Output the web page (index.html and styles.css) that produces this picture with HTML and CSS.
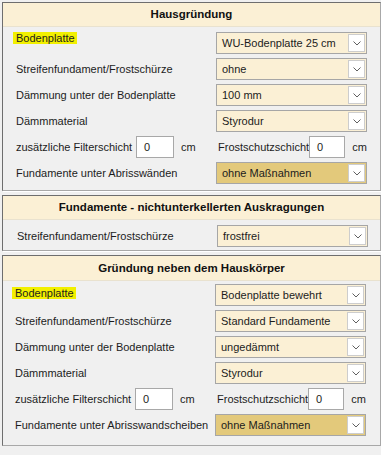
FILE: index.html
```html
<!DOCTYPE html>
<html lang="de">
<head>
<meta charset="utf-8">
<link rel="stylesheet" href="styles.css">
</head>
<body>
<div class="frame">
  <section class="panel p1">
    <div class="head">Hausgründung</div>
    <div class="body">
      <span class="lbl mark">Bodenplatte</span>
      <div class="select"><span class="val">WU-Bodenplatte 25 cm</span><span class="btn"><svg width="8" height="5" viewBox="0 0 8 5"><polyline points="0.5,0.5 4,4 7.5,0.5" fill="none" stroke="#606060" stroke-width="1"/></svg></span></div>
      <span class="lbl">Streifenfundament/Frostschürze</span>
      <div class="select"><span class="val">ohne</span><span class="btn"><svg width="8" height="5" viewBox="0 0 8 5"><polyline points="0.5,0.5 4,4 7.5,0.5" fill="none" stroke="#606060" stroke-width="1"/></svg></span></div>
      <span class="lbl">Dämmung unter der Bodenplatte</span>
      <div class="select"><span class="val">100 mm</span><span class="btn"><svg width="8" height="5" viewBox="0 0 8 5"><polyline points="0.5,0.5 4,4 7.5,0.5" fill="none" stroke="#606060" stroke-width="1"/></svg></span></div>
      <span class="lbl">Dämmmaterial</span>
      <div class="select"><span class="val">Styrodur</span><span class="btn"><svg width="8" height="5" viewBox="0 0 8 5"><polyline points="0.5,0.5 4,4 7.5,0.5" fill="none" stroke="#606060" stroke-width="1"/></svg></span></div>
      <div class="pair"><span class="plbl">zusätzliche Filterschicht</span><span class="num">0</span><span class="unit">cm</span></div>
      <div class="pair right"><span class="plbl r">Frostschutzschicht</span><span class="num">0</span><span class="unit">cm</span></div>
      <span class="lbl">Fundamente unter Abrisswänden</span>
      <div class="select gold"><span class="val">ohne Maßnahmen</span><span class="btn"><svg width="8" height="5" viewBox="0 0 8 5"><polyline points="0.5,0.5 4,4 7.5,0.5" fill="none" stroke="#606060" stroke-width="1"/></svg></span></div>
    </div>
  </section>

  <section class="panel p2">
    <div class="head">Fundamente - nichtunterkellerten Auskragungen</div>
    <div class="body">
      <span class="lbl">Streifenfundament/Frostschürze</span>
      <div class="select"><span class="val">frostfrei</span><span class="btn"><svg width="8" height="5" viewBox="0 0 8 5"><polyline points="0.5,0.5 4,4 7.5,0.5" fill="none" stroke="#606060" stroke-width="1"/></svg></span></div>
    </div>
  </section>

  <section class="panel p3">
    <div class="head">Gründung neben dem Hauskörper</div>
    <div class="body">
      <span class="lbl mark">Bodenplatte</span>
      <div class="select"><span class="val">Bodenplatte bewehrt</span><span class="btn"><svg width="8" height="5" viewBox="0 0 8 5"><polyline points="0.5,0.5 4,4 7.5,0.5" fill="none" stroke="#606060" stroke-width="1"/></svg></span></div>
      <span class="lbl">Streifenfundament/Frostschürze</span>
      <div class="select"><span class="val">Standard Fundamente</span><span class="btn"><svg width="8" height="5" viewBox="0 0 8 5"><polyline points="0.5,0.5 4,4 7.5,0.5" fill="none" stroke="#606060" stroke-width="1"/></svg></span></div>
      <span class="lbl">Dämmung unter der Bodenplatte</span>
      <div class="select"><span class="val">ungedämmt</span><span class="btn"><svg width="8" height="5" viewBox="0 0 8 5"><polyline points="0.5,0.5 4,4 7.5,0.5" fill="none" stroke="#606060" stroke-width="1"/></svg></span></div>
      <span class="lbl">Dämmmaterial</span>
      <div class="select"><span class="val">Styrodur</span><span class="btn"><svg width="8" height="5" viewBox="0 0 8 5"><polyline points="0.5,0.5 4,4 7.5,0.5" fill="none" stroke="#606060" stroke-width="1"/></svg></span></div>
      <div class="pair"><span class="plbl">zusätzliche Filterschicht</span><span class="num">0</span><span class="unit">cm</span></div>
      <div class="pair right"><span class="plbl r">Frostschutzschicht</span><span class="num">0</span><span class="unit">cm</span></div>
      <span class="lbl">Fundamente unter Abrisswandscheiben</span>
      <div class="select gold"><span class="val">ohne Maßnahmen</span><span class="btn"><svg width="8" height="5" viewBox="0 0 8 5"><polyline points="0.5,0.5 4,4 7.5,0.5" fill="none" stroke="#606060" stroke-width="1"/></svg></span></div>
    </div>
  </section>
</div>
</body>
</html>
```

FILE: styles.css
```css
html, body {
  margin: 0;
  background: #f0f0f0;
}
body {
  font-family: "Liberation Sans", Arial, sans-serif;
  font-size: 11px;
  color: #1c1c1c;
}
.frame {
  padding: 2px 0 0 2px;
  display: flex;
  flex-direction: column;
  gap: 4px;
}
.panel {
  background: #f0f0f0;
  border-style: solid;
  border-width: 1px;
  border-color: #6e6e6e #a8a8a8 #a8a8a8 #6e6e6e;
  box-shadow: 1px 1px 0 #ffffff;
}
.head {
  background: #fbf0d5;
  border-bottom: 1px solid #e9e2cf;
  height: 23px;
  line-height: 23px;
  text-align: center;
  font-weight: bold;
  font-size: 11.5px;
  color: #111;
}
.body {
  display: grid;
  grid-template-columns: 200px 151px;
  grid-auto-rows: 22px;
  row-gap: 4px;
  padding: 5px 0 6px 13px;
  align-items: center;
}
.p2 .body { padding-top: 5px; padding-bottom: 3px; padding-left: 14px; }
.p3 .head { height: 24px; line-height: 24px; }
.p3 .body { padding-top: 3px; padding-bottom: 9px; padding-left: 12px; }
.lbl {
  white-space: nowrap;
}
.mark {
  justify-self: start;
  align-self: start;
  background: #f2f000;
  margin-left: -3px;
  padding: 0 2px 0 3px;
  line-height: 12px;
}
.p3 .mark { margin-top: 3px; }
.select {
  height: 22px;
  box-sizing: border-box;
  border: 1px solid #a6a6a6;
  background: #fbf0d5;
  display: flex;
  align-items: center;
  padding-left: 5px;
}
.select.gold { background: #e3c97b; }
.val { flex: 1; white-space: nowrap; }
.btn {
  width: 17px;
  height: 18px;
  box-sizing: border-box;
  margin-right: 1px;
  background: #fff;
  border: 1px solid #cdcdcd;
  display: flex;
  align-items: center;
  justify-content: center;
}
.pair {
  display: flex;
  align-items: center;
  height: 22px;
}
.plbl { width: 120px; white-space: nowrap; }
.plbl.r { width: 97px; margin-left: 2px; }
.num {
  width: 38px;
  height: 22px;
  box-sizing: border-box;
  border: 1px solid #a8a8a8;
  background: #fff;
  padding-left: 7px;
  line-height: 20px;
}
.unit { margin-left: 7px; }
```
